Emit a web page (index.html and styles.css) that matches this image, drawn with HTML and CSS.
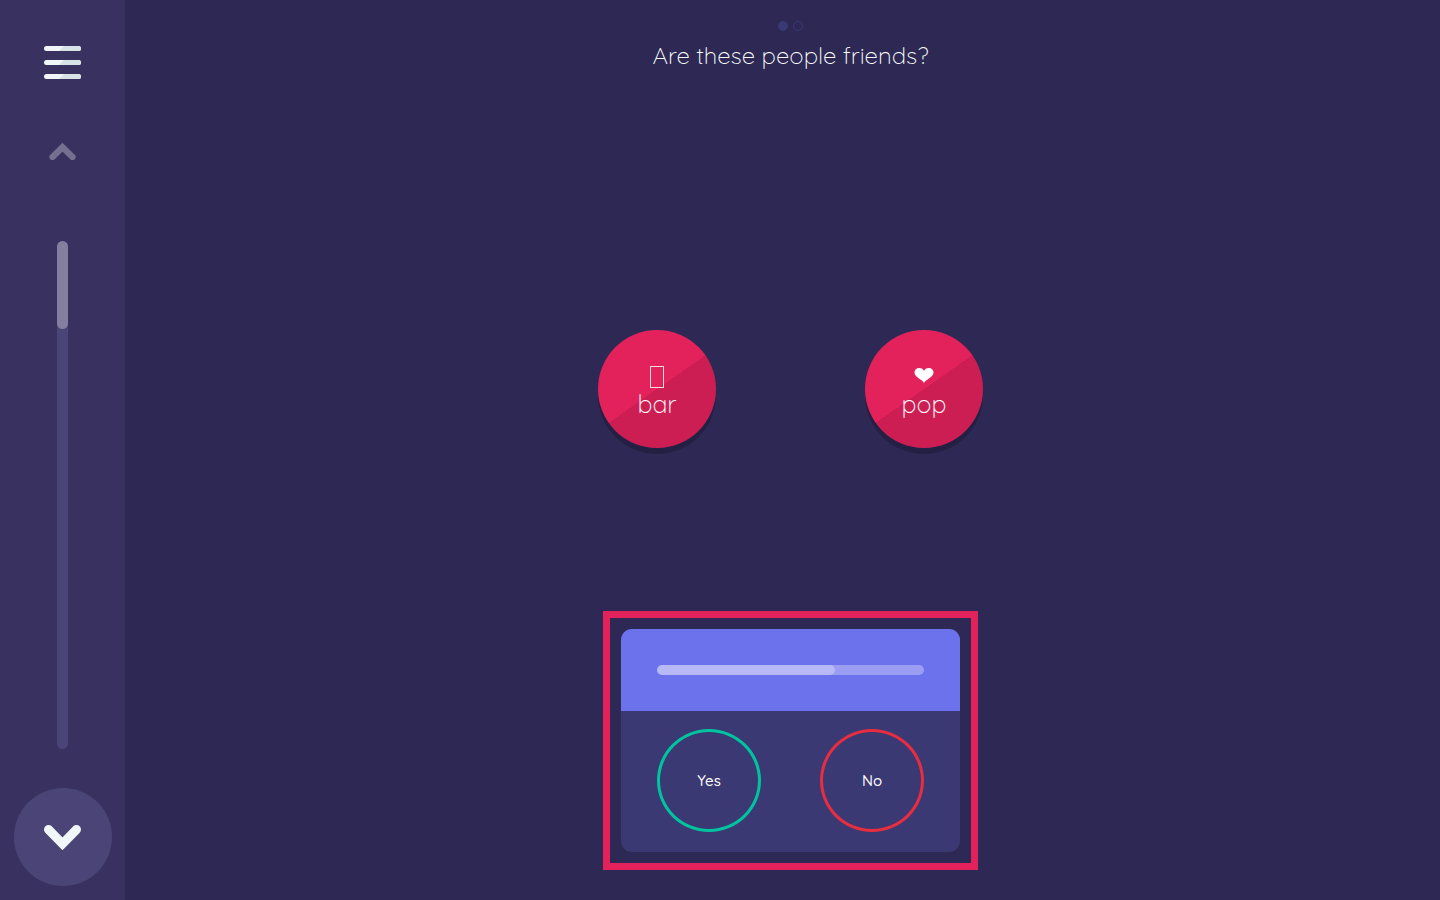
FILE: index.html
```html
<!DOCTYPE html>
<html lang="en">
<head>
<meta charset="utf-8">
<meta name="viewport" content="width=device-width, initial-scale=1">
<title>Are these people friends?</title>
<link rel="stylesheet" href="styles.css">
</head>
<body>
<div class="app">
  <nav class="sidebar" aria-label="Chapters">
    <button class="icon-button menu" type="button" aria-label="Menu">
      <svg width="37" height="34" viewBox="0 0 37 34" aria-hidden="true">
        <defs>
          <clipPath id="bars">
            <rect x="0" y="0" width="37" height="5" rx="2.5"/>
            <rect x="0" y="14" width="37" height="5" rx="2.5"/>
            <rect x="0" y="28" width="37" height="5" rx="2.5"/>
          </clipPath>
        </defs>
        <g clip-path="url(#bars)">
          <rect width="37" height="34" fill="#f1f6f8"/>
          <path d="M20 0H38V5H15ZM20 14H38V19H15ZM20 28H38V33H15Z" fill="#d8e3e7"/>
        </g>
      </svg>
    </button>
    <button class="icon-button previous" type="button" aria-label="Previous">
      <svg width="27" height="18" viewBox="0 0 27 18" aria-hidden="true">
        <path d="M3.500 15 13.500 5.200 23.500 15" fill="none" stroke="#76708f" stroke-width="6.200" stroke-linecap="round"/>
      </svg>
    </button>
    <div class="track"><div class="track-thumb"></div></div>
    <button class="icon-button next" type="button" aria-label="Next">
      <svg width="37" height="25" viewBox="0 0 37 25" aria-hidden="true">
        <path d="M4.500 4.500 18.500 18.800 32.500 4.500" fill="none" stroke="#f1f6f8" stroke-width="9" stroke-linecap="round"/>
      </svg>
    </button>
  </nav>
  <main class="stage">
    <header class="question">
      <div class="steps"><span class="step step-current"></span><span class="step"></span></div>
      <h1 class="title">Are these people friends?</h1>
    </header>
    <section class="people">
      <div class="person"><span class="glyph"><span class="empty-glyph"></span></span><span class="name">bar</span></div>
      <div class="person"><span class="glyph">
        <svg width="20" height="15" viewBox="0 0 19 15" aria-hidden="true"><path d="M9.500 15C8 11.500 0 9.300 0 4.500 0 1.600 2 0 4.700 0 7.100 0 8.800 1.200 9.500 3 10.200 1.200 11.900 0 14.300 0 17 0 19 1.600 19 4.500 19 9.300 11 11.500 9.500 15Z" fill="#fff"/></svg>
      </span><span class="name">pop</span></div>
    </section>
    <section class="frame">
      <div class="card">
        <div class="card-head"><div class="progress"><div class="progress-value"></div></div></div>
        <div class="answers">
          <button class="answer answer-yes" type="button">Yes</button>
          <button class="answer answer-no" type="button">No</button>
        </div>
      </div>
    </section>
  </main>
</div>
</body>
</html>
```

FILE: styles.css
```css
* {
  box-sizing: border-box;
}

body {
  margin: 0;
  background: #2d2954;
  color: #fff;
  font-family: Quicksand, Lato, sans-serif;
}

.app {
  display: flex;
  min-height: 100vh;
}

.sidebar {
  width: 125px;
  flex: none;
  display: flex;
  flex-direction: column;
  align-items: center;
  padding: 46px 0 14px;
  background: #393260;
}

.icon-button {
  display: flex;
  align-items: center;
  justify-content: center;
  padding: 0;
  border: 0;
  background: none;
  cursor: pointer;
}

.previous {
  margin: 62px 0 81px;
}

.track {
  flex: 1;
  width: 11px;
  border-radius: 6px;
  background: #4a4576;
}

.track-thumb {
  height: 88px;
  border-radius: 6px;
  background: #847e9f;
}

.next {
  width: 98px;
  height: 98px;
  margin-top: 39px;
  border-radius: 50%;
  background: #4a4576;
}

.stage {
  flex: 1;
  display: flex;
  flex-direction: column;
  align-items: center;
  padding: 21px 0 30px 16px;
}

.question {
  display: flex;
  flex-direction: column;
  align-items: center;
}

.steps {
  display: flex;
  gap: 5px;
}

.step {
  width: 10px;
  height: 10px;
  border: 1px solid #3b3973;
  border-radius: 50%;
}

.step-current {
  background: #3b3973;
}

.title {
  margin: 8px 0 0;
  font-size: 24px;
  font-weight: 300;
  line-height: 32px;
}

.people {
  flex: 1;
  display: flex;
  align-items: center;
  gap: 149px;
  padding-top: 96px;
}

.person {
  width: 118px;
  height: 118px;
  display: flex;
  flex-direction: column;
  align-items: center;
  padding-top: 33px;
  border-radius: 50%;
  background: linear-gradient(145deg, #e3215a 50%, #cd1e54 50%);
  box-shadow: 0 6px 0 #242044;
}

.glyph {
  height: 24px;
  display: flex;
  align-items: center;
}

.empty-glyph {
  width: 14px;
  height: 22px;
  margin-top: 4px;
  border: 1px solid #f9dbe4;
}

.name {
  font-size: 25px;
  font-weight: 300;
  line-height: 34px;
}

.frame {
  padding: 11px;
  border: 7px solid #e3215a;
}

.card {
  width: 339px;
  overflow: hidden;
  border-radius: 11px;
  background: #3b3973;
}

.card-head {
  padding: 36px;
  background: #6c72eb;
}

.progress {
  height: 10px;
  overflow: hidden;
  border-radius: 5px;
  background: #9a9df1;
}

.progress-value {
  width: 178px;
  height: 100%;
  border-radius: 5px;
  background: #b7b9f6;
}

.answers {
  display: flex;
  justify-content: space-between;
  padding: 18px 36px 20px;
}

.answer {
  width: 104px;
  height: 103px;
  padding: 0;
  border: 3px solid;
  border-radius: 50%;
  background: none;
  font-family: inherit;
  font-size: 15px;
  font-weight: 500;
  cursor: pointer;
}

.answer-yes {
  border-color: #00c4a0;
  color: #fff;
}

.answer-no {
  border-color: #e72e40;
  color: #fff;
}
```
